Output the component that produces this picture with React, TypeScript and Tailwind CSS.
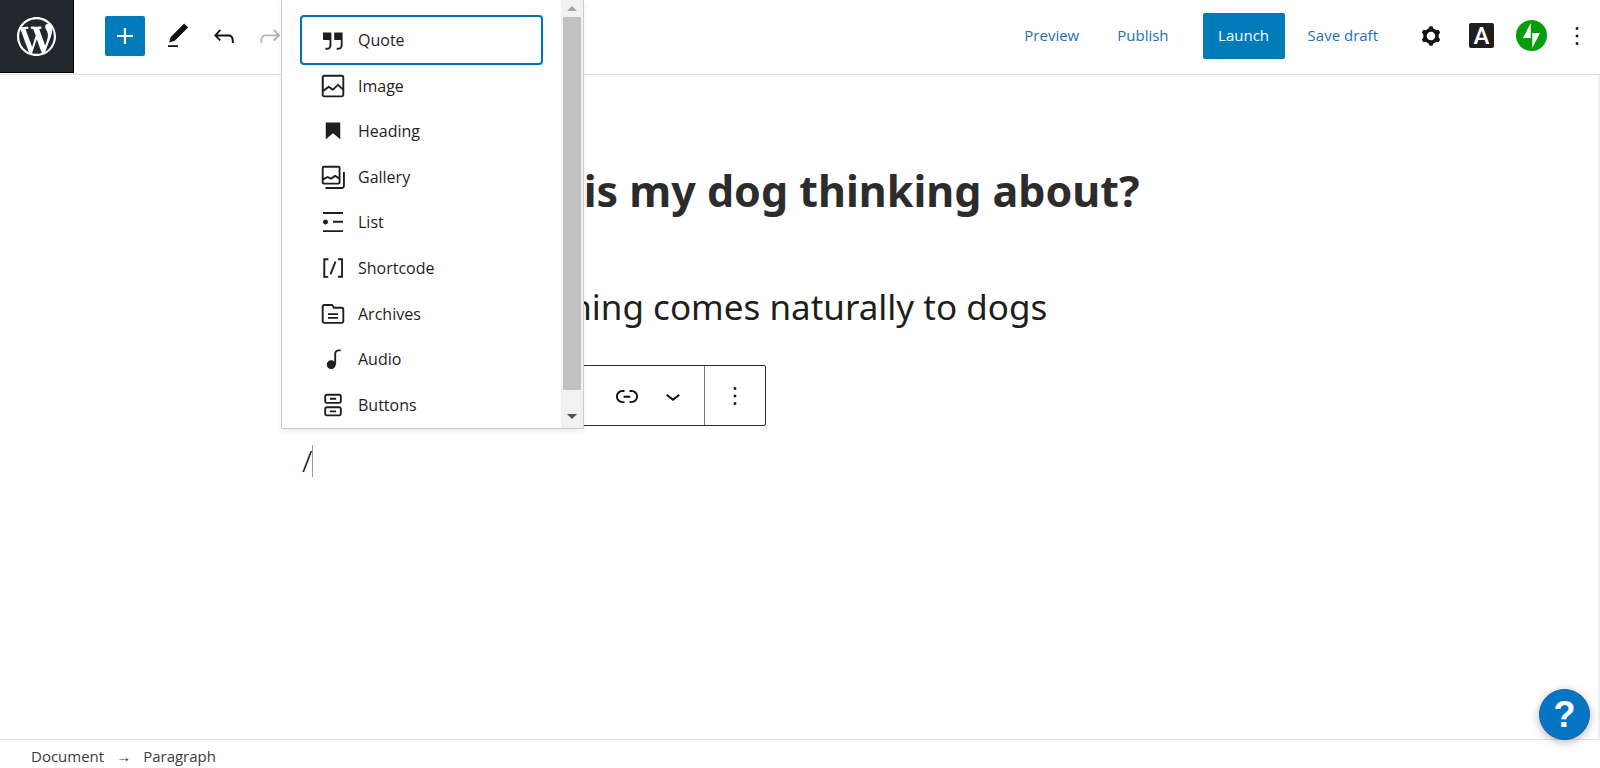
import { useState } from 'react'
import clsx from 'clsx'

const ICONS = {
  plus: 'M18 11.2h-5.2V6h-1.6v5.2H6v1.6h5.2V18h1.6v-5.2H18z',
  edit: 'M20.1 5.1L16.9 2 6.2 12.7l-1.3 4.4 4.5-1.3L20.1 5.1zM4 20.8h8v-1.5H4v1.5z',
  undo: 'M18.3 11.7c-.6-.6-1.4-.9-2.3-.9H6.7l2.9-3.3-1.1-1-4.5 5L8.5 16l1-1-2.7-2.7H16c.5 0 .9.2 1.3.5 1 1 1 3.4 1 4.5v.3h1.5v-.2c0-1.5 0-4.3-1.5-5.7z',
  redo: 'M15.6 6.5l-1.1 1 2.9 3.3H8c-.9 0-1.7.3-2.3.9-1.4 1.5-1.4 4.2-1.4 5.6v.2h1.5v-.3c0-1.1 0-3.5 1-4.5.3-.3.7-.5 1.3-.5h9.2L14.5 15l1.1 1.1 4.6-4.6-4.6-5z',
  more: 'M13 19h-2v-2h2v2zm0-6h-2v-2h2v2zm0-6h-2V5h2v2z',
  link: 'M15.6 7.2H14v1.5h1.6c2 0 3.7 1.7 3.7 3.7s-1.7 3.7-3.7 3.7H14v1.5h1.6c2.8 0 5.2-2.3 5.2-5.2 0-2.9-2.3-5.2-5.2-5.2zM4.7 12.4c0-2 1.7-3.7 3.7-3.7H10V7.2H8.4c-2.9 0-5.2 2.3-5.2 5.2 0 2.9 2.3 5.2 5.2 5.2H10v-1.5H8.4c-2 0-3.7-1.7-3.7-3.7zm4.6.9h5.3v-1.5H9.3v1.5z',
  chevron: 'M17.5 11.6L12 16l-5.5-4.4.9-1.2L12 14l4.5-3.6 1 1.2z',
  quote: 'M13 6v6h5.2v4c0 .8-.2 1.4-.5 1.7-.6.6-1.6.6-2.5.5h-.3v1.5h.5c1 0 2.3-.1 3.3-1 .6-.6 1-1.6 1-2.8V6H13zm-9 6h5.2v4c0 .8-.2 1.4-.5 1.7-.6.6-1.6.6-2.5.5h-.3v1.5h.5c1 0 2.3-.1 3.3-1 .6-.6 1-1.6 1-2.8V6H4v6z',
  image: 'M19 3H5c-1.1 0-2 .9-2 2v14c0 1.1.9 2 2 2h14c1.1 0 2-.9 2-2V5c0-1.1-.9-2-2-2zM5 4.5h14c.3 0 .5.2.5.5v8.4l-3-2.9c-.3-.3-.8-.3-1 0L11.9 14 9 12c-.3-.2-.6-.2-.8 0l-3.6 2.6V5c-.1-.3.1-.5.4-.5zm14 15H5c-.3 0-.5-.2-.5-.5v-2.4l4.1-3 3 1.9c.3.2.7.2.9-.1L16 12l3.5 3.4V19c0 .3-.2.5-.5.5z',
  heading: 'M6.2 5.2v13.4l5.8-4.8 5.8 4.8V5.2z',
  gallery: 'M16.375 4.5H4.625a.125.125 0 0 0-.125.125v8.254l2.859-1.54a.75.75 0 0 1 .68-.016l2.384 1.142 2.89-2.074a.75.75 0 0 1 .874 0l2.313 1.66V4.625a.125.125 0 0 0-.125-.125Zm.125 9.398-2.75-1.975-2.813 2.02a.75.75 0 0 1-.76.067l-2.444-1.17L4.5 14.583v1.792c0 .069.056.125.125.125h11.75a.125.125 0 0 0 .125-.125v-2.477ZM4.625 3C3.728 3 3 3.728 3 4.625v11.75C3 17.273 3.728 18 4.625 18h11.75c.898 0 1.625-.727 1.625-1.625V4.625C18 3.728 17.273 3 16.375 3H4.625ZM20 8v11c0 .69-.31 1-.999 1H6v1.5h13.001c1.52 0 2.499-.982 2.499-2.5V8H20Z',
  list: 'M4 4v1.5h16V4H4zm8 8.5h8V11h-8v1.5zM4 20h16v-1.5H4V20zm4-8c0 1.1-.9 2-2 2s-2-.9-2-2 .9-2 2-2 2 .9 2 2z',
  shortcode: 'M16 4.2v1.5h2.5v12.5H16v1.5h4V4.2h-4zM4.2 19.8h4v-1.5H5.8V5.8h2.5V4.2h-4l-.1 15.6zm5.1-3.1l1.4.6 4-10-1.4-.6-4 10z',
  archives: 'M19 6.2h-5.9l-.6-1.1c-.3-.7-1-1.1-1.8-1.1H5c-1.1 0-2 .9-2 2v11.8c0 1.1.9 2 2 2h14c1.1 0 2-.9 2-2V8.2c0-1.1-.9-2-2-2zm.5 11.6c0 .3-.2.5-.5.5H5c-.3 0-.5-.2-.5-.5V6c0-.3.2-.5.5-.5h5.8c.2 0 .4.1.4.3l1 2H19c.3 0 .5.2.5.5v9.5zM8 12.8h8v-1.5H8v1.5zm0 3h8v-1.5H8v1.5z',
  audio: 'M17.7 4.3c-1.2 0-2.8 0-3.8 1-.6.6-.9 1.5-.9 2.6V14c-.6-.6-1.5-1-2.5-1C8.6 13 7 14.6 7 16.5S8.6 20 10.5 20c1.5 0 2.8-1 3.3-2.3.5-.8.7-1.8.7-2.5V7.9c0-.7.2-1.2.5-1.6.6-.6 1.8-.6 2.8-.6h.3V4.3h-.4z',
  buttons: 'M17 3H7c-1.1 0-2 .9-2 2v4c0 1.1.9 2 2 2h10c1.1 0 2-.9 2-2V5c0-1.1-.9-2-2-2zm.5 6c0 .3-.2.5-.5.5H7c-.3 0-.5-.2-.5-.5V5c0-.3.2-.5.5-.5h10c.3 0 .5.2.5.5v4zm-8-1.2h5V6.2h-5v1.6zM17 13H7c-1.1 0-2 .9-2 2v4c0 1.1.9 2 2 2h10c1.1 0 2-.9 2-2v-4c0-1.1-.9-2-2-2zm.5 6c0 .3-.2.5-.5.5H7c-.3 0-.5-.2-.5-.5v-4c0-.3.2-.5.5-.5h10c.3 0 .5.2.5.5v4zm-8-1.2h5v-1.5h-5v1.5z',
}

type IconName = keyof typeof ICONS

const BLOCKS: { icon: IconName; label: string }[] = [
  { icon: 'quote', label: 'Quote' },
  { icon: 'image', label: 'Image' },
  { icon: 'heading', label: 'Heading' },
  { icon: 'gallery', label: 'Gallery' },
  { icon: 'list', label: 'List' },
  { icon: 'shortcode', label: 'Shortcode' },
  { icon: 'archives', label: 'Archives' },
  { icon: 'audio', label: 'Audio' },
  { icon: 'buttons', label: 'Buttons' },
]

export default function App() {
  return (
    <div className="relative flex h-screen flex-col overflow-hidden bg-white font-['Open_Sans','Noto_Sans',sans-serif] text-base text-[#1e1e1e]">
      <Header />
      <Canvas />
      <Footer />
      <BlockMenu />
      <button
        aria-label="Help"
        className="absolute right-[10px] bottom-[28px] flex size-[51px] items-center justify-center rounded-full border border-[#1c5f94] bg-[#0675c4] font-['Liberation_Sans',sans-serif] text-4xl font-bold text-white shadow-[0_2px_8px_rgba(0,0,0,0.3)]"
      >
        ?
      </button>
    </div>
  )
}

function Header() {
  return (
    <header className="flex h-[75px] shrink-0 items-start border-b border-[#e0e0e0]">
      <a
        href="#"
        aria-label="View posts"
        className="flex h-[73px] w-[74px] items-center justify-center border-r border-b border-black bg-[#23282e]"
      >
        <WordPressLogo />
      </a>
      <div className="flex h-[71px] flex-1 items-center">
        <button
          aria-label="Add block"
          className="ml-[31px] flex size-10 items-center justify-center rounded-xs bg-[#007cba] text-white"
        >
          <Icon name="plus" className="size-8" />
        </button>
        <div className="ml-[18px] flex gap-4">
          <IconButton name="edit" label="Tools" />
          <IconButton name="undo" label="Undo" />
          <IconButton name="redo" label="Redo" disabled />
        </div>

        <div className="ml-auto flex items-center text-[15px] text-[#2271b1]">
          <button className="mr-[38px]">Preview</button>
          <button className="mr-[34px]">Publish</button>
          <button className="mr-[23px] h-[46px] w-[82px] rounded-xs bg-[#007cba] text-white">Launch</button>
          <button>Save draft</button>
        </div>
        <div className="mr-2 ml-[38px] flex items-center gap-[22px]">
          <button aria-label="Settings" className="mr-px">
            <GearIcon />
          </button>
          <button
            aria-label="Options"
            className="flex size-[25px] items-center justify-center rounded-xs bg-[#1e1e1e] font-['Roboto',sans-serif] text-2xl font-medium text-white"
          >
            A
          </button>
          <button aria-label="Jetpack">
            <JetpackLogo />
          </button>
          <IconButton name="more" label="More tools" className="-ml-[7px]" />
        </div>
      </div>
    </header>
  )
}

function Canvas() {
  return (
    <main className="flex-1 border-r-2 border-[#eeeeee]">
      <div className="mx-auto max-w-[994px] pt-[76px]">
        <h1 className="text-center font-['Noto_Sans',sans-serif] text-[43px] leading-[80px] font-bold text-[#2c2c2c]">
          What is my dog thinking about?
        </h1>
        <h2 className="mt-[36px] pl-[196px] font-['Noto_Sans',sans-serif] text-[35px] leading-[80px] text-[#1e1e1e]">
          Learning comes naturally to dogs
        </h2>

        <div className="mt-[18px] flex h-[61px] w-[464px] justify-end rounded-xs border border-[#2c2c2c] bg-white">
          <div className="flex items-center gap-4 border-r border-[#757575] pr-4">
            <IconButton name="link" label="Link" />
            <IconButton name="chevron" label="More rich text controls" />
          </div>
          <div className="flex w-[60px] items-center justify-center">
            <IconButton name="more" label="More options" />
          </div>
        </div>

        <p className="mt-[19px] flex items-center font-['Noto_Sans',sans-serif] text-[30px] leading-[32px] font-light">
          /<span className="h-8 w-px bg-[#999999]" />
        </p>
      </div>
    </main>
  )
}

/** Inserter list opened by typing a slash in an empty paragraph. */
function BlockMenu() {
  const [active, setActive] = useState(0)

  return (
    <div className="absolute top-0 left-[281px] flex h-[429px] w-[303px] overflow-hidden border-x border-b border-[#cccccc] bg-white shadow-[0_3px_6px_rgba(0,0,0,0.08)]">
      <ul className="mx-5 mt-[17px] grid h-[410px] flex-1 auto-rows-fr">
        {BLOCKS.map((block, i) => (
          <li key={block.label} className="flex">
            <button
              onClick={() => setActive(i)}
              className={clsx(
                'flex flex-1 items-center gap-[10px] rounded-xs pt-px pl-4',
                i === active && 'ring-2 ring-[#0073b5]',
              )}
            >
              <Icon name={block.icon} />
              {block.label}
            </button>
          </li>
        ))}
      </ul>
      <div className="flex w-[22px] flex-col items-center bg-[#f1f1f1]">
        <Arrow className="h-[17px] text-[#a3a3a3]" points="0,5 5,0 10,5" />
        <div className="h-[373px] w-[18px] bg-[#c1c1c1]" />
        <Arrow className="mt-6 text-[#505050]" points="0,0 10,0 5,5" />
      </div>
    </div>
  )
}

function Footer() {
  return (
    <footer className="flex h-[29px] shrink-0 items-center gap-3 border-t border-[#e0e0e0] pt-1 pl-[31px] text-[15px] text-[#3c3c3c]">
      <button>Document</button>
      <span>→</span>
      <button>Paragraph</button>
    </footer>
  )
}

function Icon({ name, className = 'size-[30px]' }: { name: IconName; className?: string }) {
  return (
    <svg viewBox="0 0 24 24" fill="currentColor" fillRule="evenodd" className={clsx('shrink-0', className)} aria-hidden>
      <path d={ICONS[name]} />
    </svg>
  )
}

function IconButton({
  name,
  label,
  disabled,
  className,
}: {
  name: IconName
  label: string
  disabled?: boolean
  className?: string
}) {
  return (
    <button aria-label={label} disabled={disabled} className={clsx('text-[#111111] disabled:text-[#b5b5b5]', className)}>
      <Icon name={name} />
    </button>
  )
}

function GearIcon() {
  return (
    <svg viewBox="0 0 24 24" className="size-[30px]" fill="none" stroke="#111111" aria-hidden>
      <circle cx="12" cy="12" r="4.8" strokeWidth="2.8" />
      {[0, 60, 120, 180, 240, 300].map((deg) => (
        <path key={deg} d="M11.4 5.2h1.2l.5 1.6h-2.2z" fill="#111111" strokeWidth="2" strokeLinejoin="round" transform={`rotate(${deg} 12 12)`} />
      ))}
    </svg>
  )
}

function Arrow({ points, className }: { points: string; className?: string }) {
  return (
    <svg viewBox="0 0 10 5" fill="currentColor" className={clsx('w-[10px] shrink-0', className)} aria-hidden>
      <polygon points={points} />
    </svg>
  )
}

function JetpackLogo() {
  return (
    <svg viewBox="0 0 32 32" className="size-[31px]" aria-hidden>
      <circle cx="16" cy="16" r="16" fill="#069e08" />
      <path fill="#fff" d="M15.2 18.7H7.2l8-15.6zM16.8 28.8V13.3h8z" />
    </svg>
  )
}

function WordPressLogo() {
  return (
    <svg viewBox="0 0 20 20" fill="#fff" className="size-[39px]" aria-hidden>
      <path d="M20 10c0-5.51-4.49-10-10-10C4.48 0 0 4.49 0 10c0 5.52 4.48 10 10 10 5.51 0 10-4.48 10-10zM7.78 15.37L4.37 6.22c.55-.02 1.17-.08 1.17-.08.5-.06.44-1.13-.06-1.11 0 0-1.45.11-2.37.11-.18 0-.37 0-.58-.01C4.12 2.69 6.87 1.11 10 1.11c2.33 0 4.45.87 6.05 2.34-.68-.11-1.65.39-1.65 1.58 0 .74.45 1.36.9 2.1.35.61.55 1.36.55 2.46 0 1.49-1.4 5-1.4 5l-3.03-8.37c.54-.02.82-.17.82-.17.5-.05.44-1.25-.06-1.22 0 0-1.44.12-2.38.12-.87 0-2.33-.12-2.33-.12-.5-.03-.56 1.2-.06 1.22l.92.08 1.26 3.41zM17.41 10c.24-.64.74-1.87.43-4.25.7 1.29 1.05 2.71 1.05 4.25 0 3.29-1.73 6.24-4.4 7.78.97-2.59 1.94-5.2 2.92-7.78zM6.1 18.09C3.12 16.65 1.11 13.53 1.11 10c0-1.3.23-2.48.72-3.59C3.25 10.3 4.67 14.2 6.1 18.09zm4.03-6.63l2.58 6.98c-.86.29-1.76.45-2.71.45-.79 0-1.57-.11-2.29-.33.81-2.38 1.62-4.74 2.42-7.1z" />
    </svg>
  )
}
